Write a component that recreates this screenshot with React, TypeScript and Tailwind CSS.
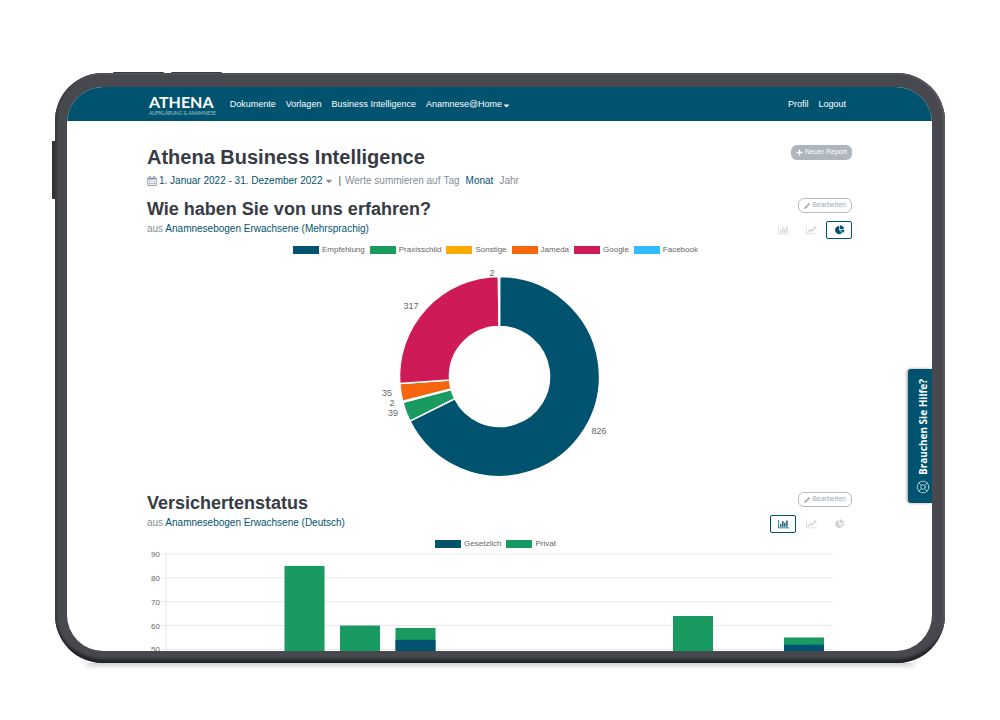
import { useState } from 'react';
import { LifeBuoy } from 'lucide-react';
import { FaCaretDown, FaPencilAlt, FaPlus } from 'react-icons/fa';

type ChartKind = 'bar' | 'line' | 'pie';

type LegendItem = {
    label: string;
    color: string;
};

type Slice = {
    value: number;
    color: string;
    labelX: number;
    labelY: number;
};

type Bar = {
    month: number;
    total: number;
    gesetzlich: number;
};

const sources: LegendItem[] = [
    { label: 'Empfehlung', color: 'bg-[#00536f]' },
    { label: 'Praxisschild', color: 'bg-[#189a61]' },
    { label: 'Sonstige', color: 'bg-[#fcab02]' },
    { label: 'Jameda', color: 'bg-[#f5660f]' },
    { label: 'Google', color: 'bg-[#cf1a58]' },
    { label: 'Facebook', color: 'bg-[#33bbff]' },
];

const insurance: LegendItem[] = [
    { label: 'Gesetzlich', color: 'bg-[#00536f]' },
    { label: 'Privat', color: 'bg-[#189a61]' },
];

const slices: Slice[] = [
    { value: 826, color: '#00536f', labelX: 452, labelY: 176 },
    { value: 39, color: '#189a61', labelX: 246, labelY: 158 },
    { value: 2, color: '#fcab02', labelX: 245, labelY: 148 },
    { value: 35, color: '#f5660f', labelX: 240, labelY: 138 },
    { value: 317, color: '#cf1a58', labelX: 264, labelY: 51 },
    { value: 2, color: '#33bbff', labelX: 345, labelY: 18 },
];

const bars: Bar[] = [
    { month: 2, total: 85, gesetzlich: 0 },
    { month: 3, total: 60, gesetzlich: 0 },
    { month: 4, total: 59, gesetzlich: 54 },
    { month: 9, total: 64, gesetzlich: 0 },
    { month: 11, total: 55, gesetzlich: 52 },
];

const chartIcons: Record<ChartKind, string> = {
    bar: 'M640 896v512H384V896h256zm384-512v1024H768V384h256zm1024 1152v128H0V128h128v1408h1920zm-640-896v768h-256V640h256zm384-384v1152h-256V256h256z',
    line: 'M2048 1536v128H0V128h128v1408h1920zM1920 288v435q0 21-19.5 29.5T1865 745l-121-121-633 633q-10 10-23 10t-23-10l-233-233-416 416-192-192 585-585q10-10 23-10t23 10l233 233 464-464-121-121q-16-16-7.5-35.5T1585 256h303q14 0 23 9t9 23z',
    pie: 'M960 890l546 546q-106 108-247.5 168T960 1664q-209 0-385.5-103T295 1281.5 192 896t103-385.5T574.5 231 960 128v762zm187 6h773q0 157-60 298.5T1692 1442zm709-128H1088V0q209 0 385.5 103T1753 382.5 1856 768z',
};

const chartNames: Record<ChartKind, string> = {
    bar: 'Balkendiagramm',
    line: 'Liniendiagramm',
    pie: 'Kreisdiagramm',
};

const CalendarIcon = () => (
    <svg viewBox="0 0 1792 1792" className="size-[10px]" fill="currentColor" aria-hidden="true">
        <path d="M192 1664h288v-288H192v288zm352 0h320v-288H544v288zm-352-352h288V992H192v320zm352 0h320V992H544v320zM192 928h288V640H192v288zm736 736h320v-288H928v288zM544 928h320V640H544v288zm768 736h288v-288h-288v288zm-384-352h320V992H928v320zM576 448V160q0-13-9.5-22.5T544 128h-64q-13 0-22.5 9.5T448 160v288q0 13 9.5 22.5T480 480h64q13 0 22.5-9.5T576 448zm736 864h288V992h-288v320zM928 928h320V640H928v288zm384 0h288V640h-288v288zm32-480V160q0-13-9.5-22.5T1312 128h-64q-13 0-22.5 9.5T1216 160v288q0 13 9.5 22.5t22.5 9.5h64q13 0 22.5-9.5T1344 448zm384-64v1280q0 52-38 90t-90 38H192q-52 0-90-38t-38-90V384q0-52 38-90t90-38h128v-96q0-66 47-113T480 0h64q66 0 113 47t47 113v96h384v-96q0-66 47-113t113-47h64q66 0 113 47t47 113v96h128q52 0 90 38t38 90z" />
    </svg>
);

const Legend = ({ items }: { items: LegendItem[] }) => (
    <ul className="flex justify-center gap-[5px] mt-[6px] pr-2 text-[8px] leading-[10px] text-[#666]">
        {items.map((item) => (
            <li key={item.label} className="flex items-center gap-[3px]">
                <span className={`w-[26px] h-2 ${item.color}`} />
                {item.label}
            </li>
        ))}
    </ul>
);

// Point on a circle around the donut centre, 0 is twelve o'clock
const point = (radius: number, share: number) => {
    const angle = share * 2 * Math.PI;
    return `${352.5 + radius * Math.sin(angle)} ${121.5 - radius * Math.cos(angle)}`;
};

const DonutChart = () => {
    const total = slices.reduce((sum, slice) => sum + slice.value, 0);
    let start = 0;

    return (
        <svg viewBox="0 0 705 236" className="block w-full h-auto" role="img" aria-label="Wie haben Sie von uns erfahren?">
            {slices.map((slice, i) => {
                const from = start / total;
                start += slice.value;
                const to = start / total;
                const large = to - from > 0.5 ? 1 : 0;
                return (
                    <path
                        key={i}
                        d={`M${point(100, from)}A100 100 0 ${large} 1 ${point(100, to)}L${point(50, to)}A50 50 0 ${large} 0 ${point(50, from)}Z`}
                        fill={slice.color}
                        stroke="#fff"
                        strokeWidth="1.5"
                    />
                );
            })}
            {slices.map((slice, i) => (
                <text key={i} x={slice.labelX} y={slice.labelY + 3} textAnchor="middle" className="text-[9px] fill-[#666]">
                    {slice.value}
                </text>
            ))}
        </svg>
    );
};

const BarChart = () => {
    const valueToY = (value: number) => 5 + (90 - value) * 2.385;

    return (
        <svg viewBox="0 0 705 105" className="block w-full h-auto" role="img" aria-label="Versichertenstatus">
            {[90, 80, 70, 60, 50].map((tick) => (
                <g key={tick}>
                    <line x1="14" x2="686" y1={valueToY(tick)} y2={valueToY(tick)} stroke="#e9e9e9" />
                    <text x="13" y={valueToY(tick) + 3} textAnchor="end" className="text-[8px] fill-[#666]">
                        {tick}
                    </text>
                </g>
            ))}
            <line x1="19" x2="19" y1="5" y2="105" stroke="#e3e3e3" />
            {bars.map((bar) => {
                const x = 19 + bar.month * 55.5 + 7.5;
                return (
                    <g key={bar.month}>
                        <rect x={x} y={valueToY(bar.total)} width="40" height="130" fill="#189a61" />
                        {bar.gesetzlich > 0 && (
                            <rect x={x} y={valueToY(bar.gesetzlich)} width="40" height="130" fill="#00536f" />
                        )}
                    </g>
                );
            })}
        </svg>
    );
};

type ReportProps = {
    title: string;
    form: string;
    initialKind: ChartKind;
    legend: LegendItem[];
    children: React.ReactNode;
};

const Report = ({ title, form, initialKind, legend, children }: ReportProps) => {
    const [kind, setKind] = useState<ChartKind>(initialKind);

    return (
        <section>
            <div className="flex justify-between items-start">
                <div>
                    <h2 className="text-[18px] leading-6 font-bold text-[#373b44]">{title}</h2>
                    <p className="text-[10px] leading-4 text-[#868e96]">
                        aus <a href="#formular" className="text-[#00536f]">{form}</a>
                    </p>
                </div>
                <div className="flex flex-col items-end gap-2 pt-[1px]">
                    <button className="flex items-center gap-[2px] h-[15px] px-[5px] border border-[#b5bac0] rounded-[6px] text-[7px] text-[#a4abb2]">
                        <FaPencilAlt className="size-[6px]" />
                        Bearbeiten
                    </button>
                    <div className="flex gap-[2px]">
                        {(['bar', 'line', 'pie'] as ChartKind[]).map((option) => (
                            <button
                                key={option}
                                aria-label={chartNames[option]}
                                onClick={() => setKind(option)}
                                className={
                                    kind === option
                                        ? 'flex items-center justify-center w-[26px] h-[18px] border border-[#00536f] rounded-[2px] text-[#00536f]'
                                        : 'flex items-center justify-center w-[26px] h-[18px] text-[#d3d6d9]'
                                }
                            >
                                <svg viewBox="0 0 2048 1792" className="w-[11px] h-[10px]" fill="currentColor" aria-hidden="true">
                                    <path d={chartIcons[option]} />
                                </svg>
                            </button>
                        ))}
                    </div>
                </div>
            </div>
            <Legend items={legend} />
            {children}
        </section>
    );
};

const Navbar = () => (
    <nav className="flex items-center h-[34px] px-20 pt-[2px] bg-[#00536f] text-[9px] text-white">
        <a href="#start" className="flex flex-col ml-[2px] mr-[14px] font-['Lato',sans-serif]">
            <span className="text-[16px] leading-4 font-bold">ATHENA</span>
            <span className="text-[5px] leading-[6px] text-[#a9c6d1]">AUFKLÄRUNG &amp; ANAMNESE</span>
        </a>
        <div className="flex gap-[10px]">
            <a href="#dokumente">Dokumente</a>
            <a href="#vorlagen">Vorlagen</a>
            <a href="#bi">Business Intelligence</a>
            <a href="#home" className="flex items-center">
                Anamnese@Home
                <FaCaretDown className="size-[9px]" />
            </a>
        </div>
        <div className="flex gap-[10px] ml-auto pr-[6px]">
            <a href="#profil">Profil</a>
            <a href="#logout">Logout</a>
        </div>
    </nav>
);

const App = () => {
    return (
        <div className="h-screen px-[55px] pt-[73px] pb-[57px] bg-white font-['Liberation_Sans',Arial,sans-serif]">
            <div className="relative h-full">
                {/* Hardware buttons and ground shadow */}
                <div className="absolute -top-[1px] left-[58px] w-[51px] h-2 rounded-t-[1px] bg-[#3b3c40]" />
                <div className="absolute -top-[1px] left-[116px] w-[51px] h-2 rounded-t-[1px] bg-[#3b3c40]" />
                <div className="absolute top-[68px] -left-[3px] w-2 h-[58px] rounded-l-[1px] bg-[#323337]" />
                <div className="absolute bottom-0 inset-x-8 h-4 shadow-[0_3px_5px_rgba(0,0,0,0.2)]" />

                <div className="relative h-full pl-[12px] pr-[13px] pt-[14px] pb-[12px] rounded-[48px] bg-[#47494e] shadow-[inset_0_-6px_3px_-2px_#232428,inset_2px_0_2px_#3a3b3f,inset_-2px_0_2px_#5a5b60,inset_0_2px_1px_#56575b]">
                    <div className="relative h-full rounded-[36px] overflow-hidden bg-white">
                        <Navbar />
                        <main className="px-20 pt-6">
                            <div className="flex justify-between items-start">
                                <h1 className="text-[20px] leading-6 font-bold text-[#373b44]">Athena Business Intelligence</h1>
                                <button className="flex items-center gap-[2px] h-[15px] px-[5px] rounded-[6px] bg-[#adb5bd] text-[7px] text-white">
                                    <FaPlus className="size-[7px]" />
                                    Neuer Report
                                </button>
                            </div>
                            <div className="flex items-center mt-[2px] mb-[6px] text-[10px] leading-5 text-[#868e96]">
                                <CalendarIcon />
                                <button className="flex items-center gap-[2px] ml-[2px] text-[#00536f]">
                                    1. Januar 2022 - 31. Dezember 2022
                                    <FaCaretDown className="size-[10px] text-[#868e96]" />
                                </button>
                                <span className="mx-1 text-[#555]">|</span>
                                <span>Werte summieren auf</span>
                                <button className="ml-[3px]">Tag</button>
                                <button className="ml-[6px] text-[#00536f]">Monat</button>
                                <button className="ml-[6px]">Jahr</button>
                            </div>

                            <Report
                                title="Wie haben Sie von uns erfahren?"
                                form="Anamnesebogen Erwachsene (Mehrsprachig)"
                                initialKind="pie"
                                legend={sources}
                            >
                                <DonutChart />
                            </Report>
                            <Report
                                title="Versichertenstatus"
                                form="Anamnesebogen Erwachsene (Deutsch)"
                                initialKind="bar"
                                legend={insurance}
                            >
                                <BarChart />
                            </Report>
                        </main>

                        <button className="absolute right-0 top-1/2 flex flex-col items-center justify-end gap-[5px] w-6 h-[134px] pb-[9px] pl-[5px] rounded-l-[3px] bg-[#00536f] shadow-[-1px_0_3px_rgba(0,0,0,0.4)] text-white">
                            <span className="rotate-180 [writing-mode:vertical-rl] font-['Open_Sans',sans-serif] text-[10px] leading-3 font-bold">
                                Brauchen Sie Hilfe?
                            </span>
                            <LifeBuoy className="size-[14px] text-[#b9d0d9]" strokeWidth={1.5} />
                        </button>
                    </div>
                </div>
            </div>
        </div>
    );
};

export default App;
